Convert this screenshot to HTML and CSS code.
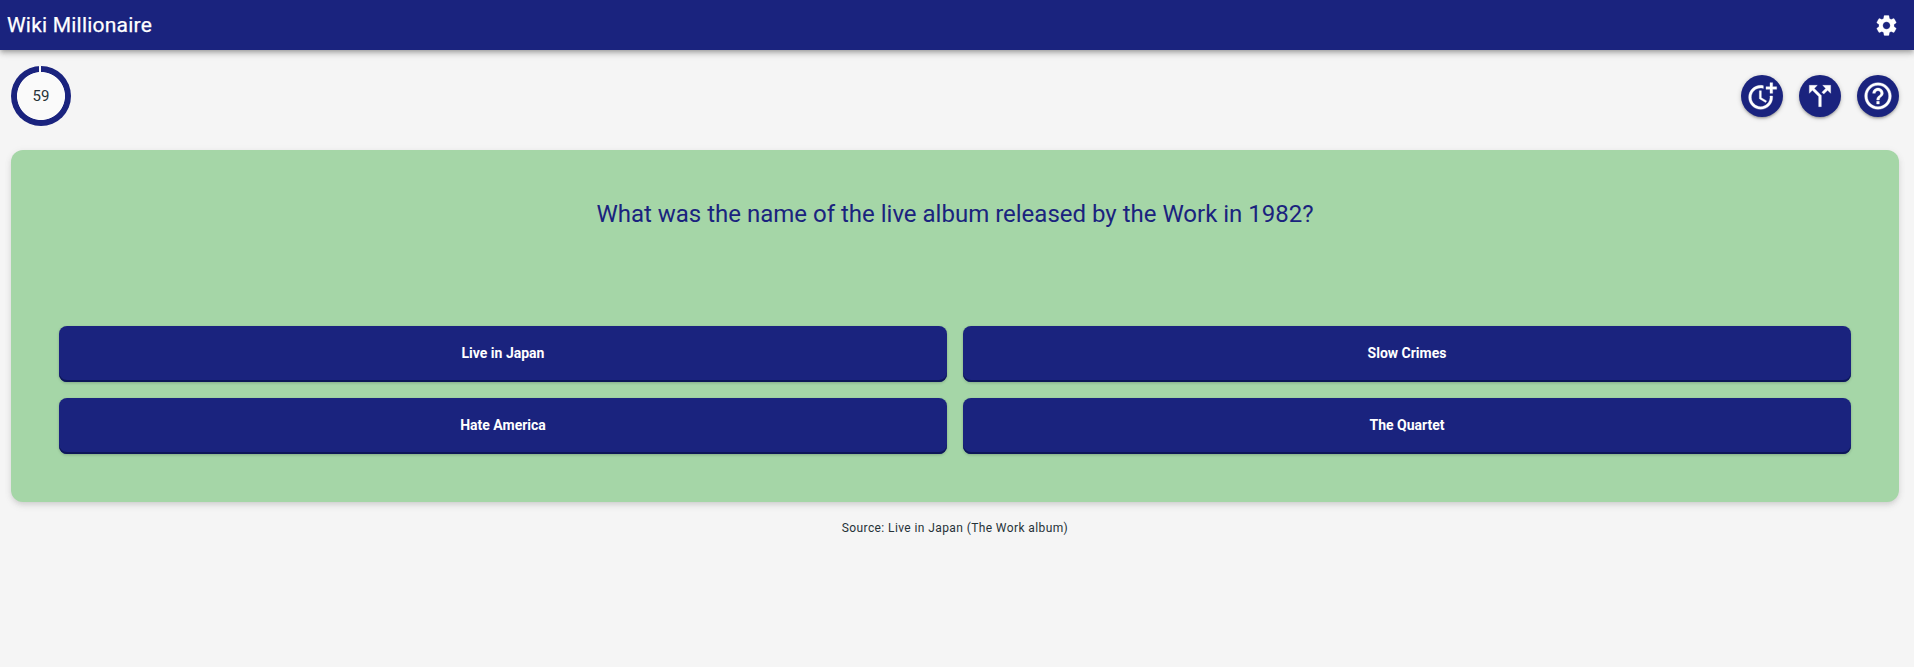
FILE: index.html
```html
<!DOCTYPE html>
<html lang="en">
<head>
<meta charset="utf-8">
<title>Wiki Millionaire</title>
<link rel="stylesheet" href="styles.css">
</head>
<body>
<header class="app-bar">
  <h1 class="app-title">Wiki Millionaire</h1>
  <button class="settings" aria-label="Settings">
    <svg viewBox="0 0 24 24" width="25" height="25"><path d="M19.14 12.94c.04-.3.06-.61.06-.94 0-.32-.02-.64-.07-.94l2.03-1.58c.18-.14.23-.41.12-.61l-1.92-3.32c-.12-.22-.37-.29-.59-.22l-2.39.96c-.5-.38-1.03-.7-1.62-.94l-.36-2.54c-.04-.24-.24-.41-.48-.41h-3.84c-.24 0-.43.17-.47.41l-.36 2.54c-.59.24-1.13.57-1.62.94l-2.39-.96c-.22-.08-.47 0-.59.22L2.74 8.87c-.12.21-.08.47.12.61l2.03 1.58c-.05.3-.09.63-.09.94s.02.64.07.94l-2.03 1.58c-.18.14-.23.41-.12.61l1.92 3.32c.12.22.37.29.59.22l2.39-.96c.5.38 1.03.7 1.62.94l.36 2.54c.05.24.24.41.48.41h3.84c.24 0 .44-.17.47-.41l.36-2.54c.59-.24 1.13-.56 1.62-.94l2.39.96c.22.08.47 0 .59-.22l1.92-3.32c.12-.22.07-.47-.12-.61l-2.01-1.58zM12 15.6c-1.98 0-3.6-1.62-3.6-3.6s1.62-3.6 3.6-3.6 3.6 1.62 3.6 3.6-1.62 3.6-3.6 3.6z"/></svg>
  </button>
</header>
<main class="game">
  <div class="status">
    <div class="timer"><span class="timer-value">59</span></div>
    <div class="lifelines">
      <button class="lifeline" aria-label="More time">
        <svg viewBox="0 0 24 24" width="32" height="32"><path d="M10 8v6l4.7 2.9.8-1.2-4-2.4V8z"/><path d="M17.92 12c.05.33.08.66.08 1 0 3.9-3.1 7-7 7s-7-3.1-7-7 3.1-7 7-7c.7 0 1.37.1 2 .29V4.23c-.64-.15-1.31-.23-2-.23-5 0-9 4-9 9s4 9 9 9 9-4 9-9c0-.34-.02-.67-.06-1h-2.02z"/><path d="M20 5V2h-2v3h-3v2h3v3h2V7h3V5z"/></svg>
      </button>
      <button class="lifeline" aria-label="Fifty-fifty">
        <svg viewBox="0 0 24 24" width="32" height="32"><path d="M14 4l2.29 2.29-2.88 2.88 1.42 1.42 2.88-2.88L20 10V4zM10 4H4v6l2.29-2.29 4.71 4.7V20h2v-8.41l-5.29-5.3z"/></svg>
      </button>
      <button class="lifeline" aria-label="Hint">
        <svg viewBox="0 0 24 24" width="32" height="32"><path d="M11 18h2v-2h-2v2zm1-16C6.48 2 2 6.48 2 12s4.48 10 10 10 10-4.48 10-10S17.52 2 12 2zm0 18c-4.41 0-8-3.59-8-8s3.59-8 8-8 8 3.59 8 8-3.59 8-8 8zm0-14c-2.21 0-4 1.79-4 4h2c0-1.1.9-2 2-2s2 .9 2 2c0 2-3 1.75-3 5h2c0-2.25 3-2.5 3-5 0-2.21-1.79-4-4-4z"/></svg>
      </button>
    </div>
  </div>
  <section class="card">
    <h2 class="question">What was the name of the live album released by the Work in 1982?</h2>
    <div class="answers">
      <button class="answer">Live in Japan</button>
      <button class="answer">Slow Crimes</button>
      <button class="answer">Hate America</button>
      <button class="answer">The Quartet</button>
    </div>
  </section>
  <p class="source">Source: Live in Japan (The Work album)</p>
</main>
</body>
</html>
```
FILE: styles.css
```css
* { box-sizing: border-box; }
html { height: 100%; }
body {
  margin: 0;
  min-height: 100%;
  background: #f5f5f5;
  font-family: Roboto, sans-serif;
  color: #263238;
}
button {
  border: 0;
  padding: 0;
  font-family: inherit;
  color: #fff;
  cursor: pointer;
}
svg {
  display: block;
  fill: currentColor;
  stroke: currentColor;
  stroke-width: .25;
}

.app-bar {
  position: relative;
  display: flex;
  align-items: center;
  justify-content: space-between;
  height: 50px;
  padding-left: 7px;
  background: #1a237e;
  color: #fff;
  box-shadow: 0 2px 4px -1px rgba(0,0,0,.2), 0 4px 5px rgba(0,0,0,.14), 0 1px 10px rgba(0,0,0,.12);
}
.app-title {
  margin: 0;
  font-size: 21px;
  font-weight: 400;
  line-height: 32px;
  letter-spacing: .21px;
  -webkit-text-stroke: .25px currentColor;
}
.settings {
  display: flex;
  align-items: center;
  justify-content: center;
  width: 55px;
  height: 50px;
  background: transparent;
}

.game { padding: 16px 15px 0 11px; }
.status {
  display: flex;
  align-items: center;
  justify-content: space-between;
  height: 60px;
}
.timer {
  display: grid;
  place-items: center;
  width: 60px;
  height: 60px;
  border-radius: 50%;
  background:
    radial-gradient(circle, #fafafa 23.6px, transparent 24.4px),
    conic-gradient(#1a237e 0 355.5deg, #fafafa 355.5deg);
}
.timer-value { font-size: 15px; line-height: 20px; }
.lifelines { display: flex; gap: 16px; }
.lifeline {
  display: grid;
  place-items: center;
  width: 42px;
  height: 42px;
  border-radius: 50%;
  background: #1a237e;
  box-shadow: 0 1px 5px rgba(0,0,0,.2), 0 2px 2px rgba(0,0,0,.14), 0 3px 1px -2px rgba(0,0,0,.12);
}

.card {
  height: 352px;
  margin-top: 24px;
  padding: 48px;
  border-radius: 12px;
  background: #a5d6a7;
  display: flex;
  flex-direction: column;
  justify-content: space-between;
  box-shadow: 0 3px 5px -1px rgba(0,0,0,.08), 0 4px 8px rgba(0,0,0,.06), 0 1px 8px rgba(0,0,0,.05);
}
.question {
  margin: 0;
  text-align: center;
  font-size: 24px;
  font-weight: 400;
  line-height: 32px;
  color: #1a237e;
}
.answers {
  display: grid;
  grid-template-columns: 1fr 1fr;
  gap: 16px;
}
.answer {
  height: 56px;
  padding-bottom: 2px;
  border-radius: 8px;
  background: #1a237e;
  font-size: 14px;
  font-weight: 700;
  box-shadow: inset 0 -2px 0 #0d1758, 0 1px 3px rgba(0,0,0,.2);
}
.source {
  margin: 16px 0 0;
  text-align: center;
  font-size: 12px;
  line-height: 20px;
  letter-spacing: .4px;
}
```
